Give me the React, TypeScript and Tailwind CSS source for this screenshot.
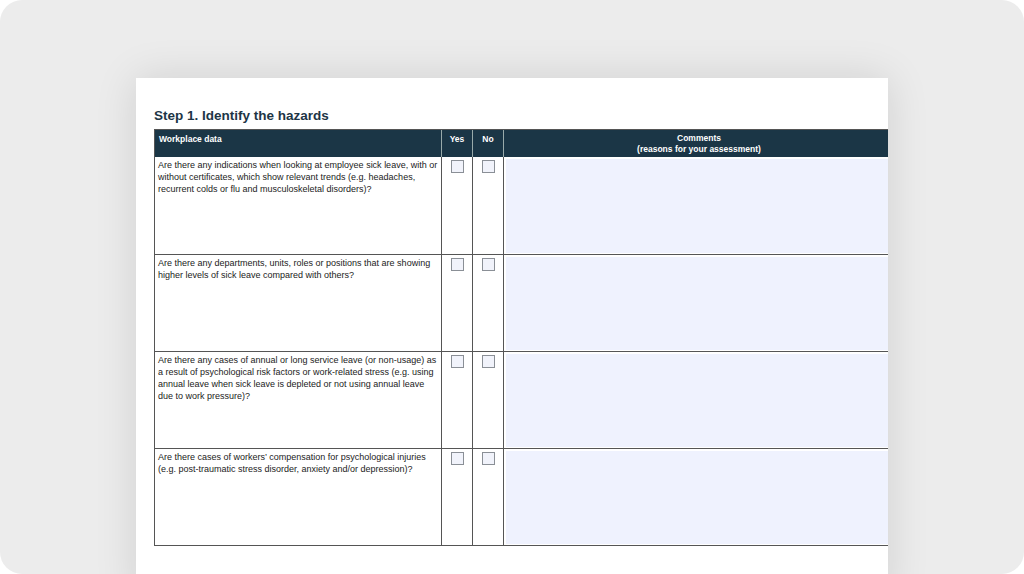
const rows = [
  "Are there any indications when looking at employee sick leave, with or without certificates, which show relevant trends (e.g. headaches, recurrent colds or flu and musculoskeletal disorders)?",
  "Are there any departments, units, roles or positions that are showing higher levels of sick leave compared with others?",
  "Are there any cases of annual or long service leave (or non-usage) as a result of psychological risk factors or work-related stress (e.g. using annual leave when sick leave is depleted or not using annual leave due to work pressure)?",
  "Are there cases of workers’ compensation for psychological injuries (e.g. post-traumatic stress disorder, anxiety and/or depression)?",
]

function Box() {
  return <div className="w-[13px] h-[13px] border border-[#8a8f96] bg-[#f1f3fb] mx-auto mt-[3px]" />
}

export default function App() {
  return (
    <div className="w-[1024px] h-[574px] bg-white overflow-hidden" style={{ fontFamily: '"Liberation Sans", Arial, sans-serif' }}>
      <div className="w-full h-full bg-[#ececec] rounded-[22px] overflow-hidden pl-[136px] pt-[78px]">
        <div className="w-[752px] h-[520px] bg-white shadow-[0_0_40px_rgba(0,0,0,0.12)] pl-[18px] pt-[30px] overflow-hidden">
          <h1 className="text-[13.5px] font-bold text-[#1d3546] leading-[16px] mb-[5px]">Step 1. Identify the hazards</h1>
          <div className="w-[740px] border border-[#555] border-r-0">
            <div className="flex h-[27px] bg-[#1b3646] text-white text-[8.5px] font-bold">
              <div className="w-[287px] px-[4px] pt-[3px] border-r border-[#9aa]">Workplace data</div>
              <div className="w-[31px] text-center pt-[3px] border-r border-[#9aa]">Yes</div>
              <div className="w-[31px] text-center pt-[3px] border-r border-[#9aa]">No</div>
              <div className="flex-1 text-center pt-[3px] leading-[11px]">Comments<br />(reasons for your assessment)</div>
            </div>
            {rows.map((r, i) => (
              <div key={i} className={`flex h-[97px] ${i > 0 ? "border-t border-[#555]" : ""}`}>
                <div className="w-[287px] px-[3px] pt-[2px] text-[9px] leading-[12px] text-[#222] border-r border-[#555]">{r}</div>
                <div className="w-[31px] border-r border-[#555]"><Box /></div>
                <div className="w-[31px] border-r border-[#555]"><Box /></div>
                <div className="flex-1 p-[2px] pb-[1px]"><div className="w-full h-full bg-[#eff2fe]" /></div>
              </div>
            ))}
          </div>
        </div>
      </div>
    </div>
  )
}
